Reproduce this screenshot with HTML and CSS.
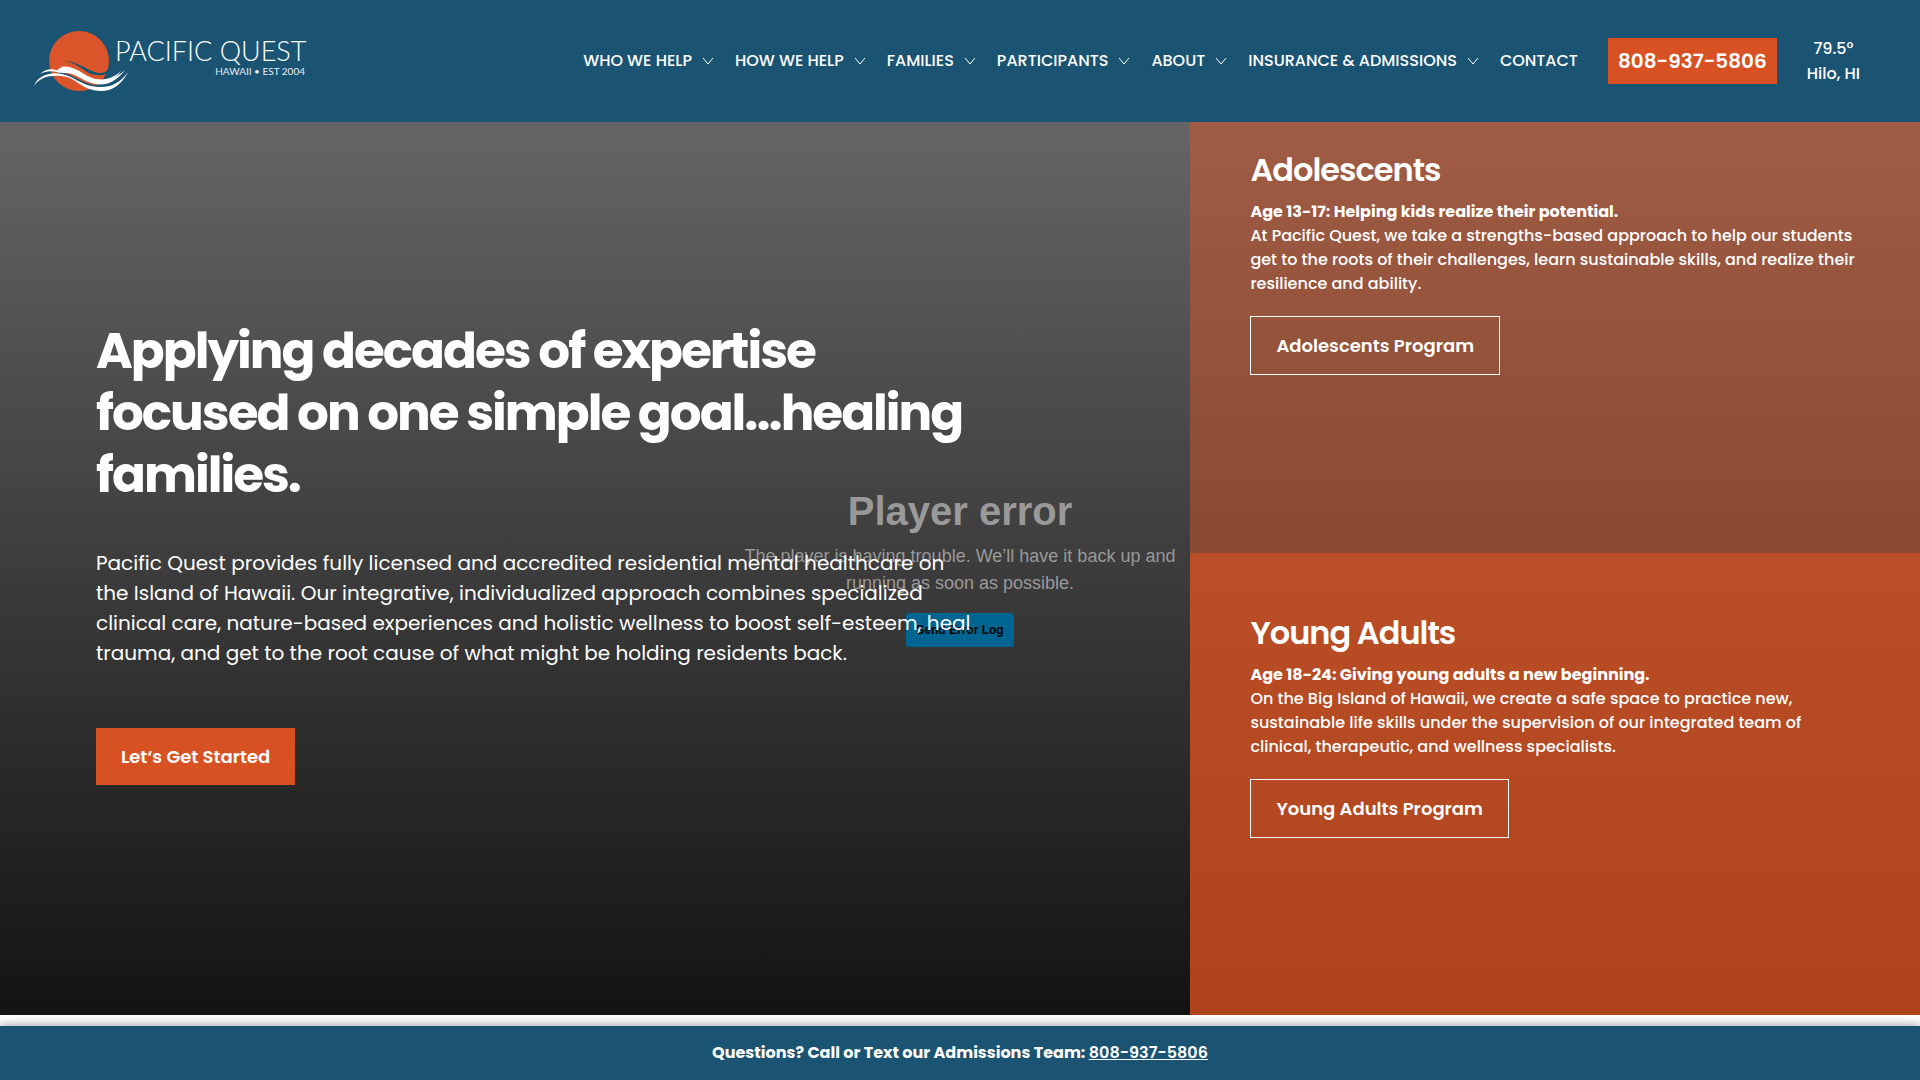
FILE: index.html
```html
<!DOCTYPE html>
<html lang="en">
<head>
<meta charset="utf-8">
<meta name="viewport" content="width=device-width, initial-scale=1">
<title>Pacific Quest</title>
<link rel="stylesheet" href="styles.css">
</head>
<body>
<header class="site-header">
  <a class="logo" href="#" aria-label="Pacific Quest home">
    <svg class="logo-art" viewBox="34 30 274 62" width="274" height="62">
      <circle cx="79" cy="61" r="30" fill="#dc5429"/>
      <path d="M62 61C74 60 83 67 92 71C99 74 104 74 109 69L107 74C100 76 94 76 87 72C79 67 73 61 62 61Z" fill="#1b5373"/>
      <path d="M40 74C45 69 52 68 59 71C54 69 67 63 76 71C88 80 105 88 125 70C112 88 97 86 86 81C76 76 70 71 61 74C54 70 46 71 40 74Z" fill="#fff"/>
      <path d="M59 67C73 64 81 73 90 77C103 83 115 77 121 71C112 84 97 84 86 79C76 73 71 66 59 67Z" fill="#fff"/>
      <path d="M54 74C64 70 72 76 80 80C93 87 107 88 120 78C105 92 90 89 78 82C71 78 64 74 54 74Z" fill="#1b5373"/>
      <path d="M54 74C60 73 66 76 71 78L71 80C66 76 60 75 54 74Z" fill="#dc5429"/>
      <path d="M34 86C37 76 50 71 62 74C74 77 81 84 91 86C106 89 118 86 128 72C119 90 105 94 89 89C78 85 73 76 60 76C49 75 39 78 34 86Z" fill="#fff"/>
      <text class="logo-name" x="115" y="61">PACIFIC QUEST</text>
      <text class="logo-tag" x="305" y="75" text-anchor="end">HAWAII • EST 2004</text>
    </svg>
  </a>
  <nav class="main-nav">
    <a href="#">WHO WE HELP<svg viewBox="0 0 12 8"><path d="M1 1l5 6 5-6"/></svg></a>
    <a href="#">HOW WE HELP<svg viewBox="0 0 12 8"><path d="M1 1l5 6 5-6"/></svg></a>
    <a href="#">FAMILIES<svg viewBox="0 0 12 8"><path d="M1 1l5 6 5-6"/></svg></a>
    <a href="#">PARTICIPANTS<svg viewBox="0 0 12 8"><path d="M1 1l5 6 5-6"/></svg></a>
    <a href="#">ABOUT<svg viewBox="0 0 12 8"><path d="M1 1l5 6 5-6"/></svg></a>
    <a href="#">INSURANCE &amp; ADMISSIONS<svg viewBox="0 0 12 8"><path d="M1 1l5 6 5-6"/></svg></a>
    <a href="#">CONTACT</a>
  </nav>
  <a class="phone" href="tel:8089375806">808-937-5806</a>
  <div class="weather">79.5°<br>Hilo, HI</div>
</header>

<main class="hero">
  <section class="player">
    <h2>Player error</h2>
    <p>The player is having trouble. We’ll have it back up and running as soon as possible.</p>
    <button type="button">Send Error Log</button>
  </section>
  <section class="intro">
    <h1>Applying decades of expertise<br>focused on one simple goal...healing<br>families.</h1>
    <p>Pacific Quest provides fully licensed and accredited residential mental healthcare on<br>the Island of Hawaii. Our integrative, individualized approach combines specialized<br>clinical care, nature-based experiences and holistic wellness to boost self-esteem, heal<br>trauma, and get to the root cause of what might be holding residents back.</p>
    <a class="cta" href="#">Let‘s Get Started</a>
  </section>
  <div class="programs">
    <section class="program adolescents">
      <h2>Adolescents</h2>
      <p><strong>Age 13-17: Helping kids realize their potential.</strong><br>At Pacific Quest, we take a strengths-based approach to help our students<br>get to the roots of their challenges, learn sustainable skills, and realize their<br>resilience and ability.</p>
      <a class="outline" href="#">Adolescents Program</a>
    </section>
    <section class="program young-adults">
      <h2>Young Adults</h2>
      <p><strong>Age 18-24: Giving young adults a new beginning.</strong><br>On the Big Island of Hawaii, we create a safe space to practice new,<br>sustainable life skills under the supervision of our integrated team of<br>clinical, therapeutic, and wellness specialists.</p>
      <a class="outline" href="#">Young Adults Program</a>
    </section>
  </div>
</main>

<footer class="contact-bar">Questions? Call or Text our Admissions Team:&nbsp;<a href="tel:8089375806">808-937-5806</a></footer>
</body>
</html>
```
FILE: styles.css
```css
* { box-sizing: border-box; }

body {
  margin: 0;
  min-height: 100vh;
  display: flex;
  flex-direction: column;
  background: #fff;
  color: #fff;
  font-family: Poppins, Inter, sans-serif;
}

h1, h2, p { margin: 0; }
a { color: inherit; text-decoration: none; }

.site-header {
  display: flex;
  align-items: center;
  min-height: 122px;
  padding: 0 60px 0 34px;
  background: #1b5373;
}
.logo { margin-right: auto; }
.logo-art { display: block; }
.logo-name { font: 300 27px Lato, sans-serif; fill: #fff; }
.logo-tag { font: 400 10px Lato, sans-serif; fill: #e4edf2; }

.main-nav { display: flex; gap: 21px; }
.main-nav a {
  display: flex;
  align-items: center;
  gap: 10px;
  font-size: 16px;
  font-weight: 500;
  line-height: 24px;
  white-space: nowrap;
}
.main-nav svg {
  width: 12px;
  height: 8px;
  fill: none;
  stroke: #fff;
}
.phone {
  margin: 0 30px;
  padding: 0 10px;
  background: #d85123;
  font-size: 20px;
  font-weight: 600;
  line-height: 46px;
  white-space: nowrap;
}
.weather {
  font-size: 16px;
  font-weight: 500;
  line-height: 25px;
  text-align: center;
  white-space: nowrap;
}

.hero {
  position: relative;
  flex: 1;
  display: grid;
  grid-template-columns: 62fr 38fr;
  background: linear-gradient(#656565, #131313);
}

.player {
  position: absolute;
  inset: 0;
  display: flex;
  flex-direction: column;
  align-items: center;
  justify-content: center;
  padding-bottom: 4px;
  color: #999;
  font-family: "Liberation Sans", Arial, sans-serif;
  text-align: center;
}
.player h2 { font-size: 40px; line-height: 48px; }
.player p {
  max-width: 448px;
  margin: 8px 0 16px;
  font-size: 18px;
  line-height: 27px;
}
.player button {
  height: 34px;
  padding: 0 10px;
  border: 0;
  border-radius: 3px;
  background: #006590;
  color: #000;
  font: bold 12px "Liberation Sans", Arial, sans-serif;
}

.intro {
  position: relative;
  display: flex;
  flex-direction: column;
  align-items: flex-start;
  justify-content: center;
  padding: 0 96px 32px;
}
.intro h1 {
  font-size: 50px;
  font-weight: 700;
  letter-spacing: -2px;
  line-height: 62px;
  white-space: nowrap;
}
.intro p {
  margin: 42px 0 60px;
  font-size: 20px;
  line-height: 30px;
  white-space: nowrap;
}
.cta, .outline {
  padding: 0 25px;
  font-size: 18px;
  font-weight: 600;
  line-height: 57px;
  white-space: nowrap;
}
.cta { background: #d85123; }

.programs {
  position: relative;
  display: grid;
  grid-template-rows: auto 1fr;
}
.program {
  display: flex;
  flex-direction: column;
  align-items: flex-start;
  padding: 28px 60px 178px;
}
.adolescents { background: linear-gradient(#a05c45, #894a31); }
.young-adults {
  padding-top: 60px;
  padding-bottom: 60px;
  background: linear-gradient(#b94e27, #ae431c);
}
.program h2 {
  font-size: 32px;
  font-weight: 600;
  letter-spacing: -1px;
  line-height: 40px;
}
.program p {
  margin: 10px 0 20px;
  font-size: 16px;
  font-weight: 500;
  line-height: 24px;
  white-space: nowrap;
}
.program strong { font-weight: 700; }
.outline { border: 1px solid #fff; }

.contact-bar {
  display: flex;
  justify-content: center;
  margin-top: 11px;
  background: #1b5373;
  box-shadow: 0 0 10px rgba(0, 0, 0, .45);
  font-size: 16px;
  font-weight: 700;
  line-height: 54px;
}
.contact-bar a { font-weight: 600; text-decoration: underline; }
```
